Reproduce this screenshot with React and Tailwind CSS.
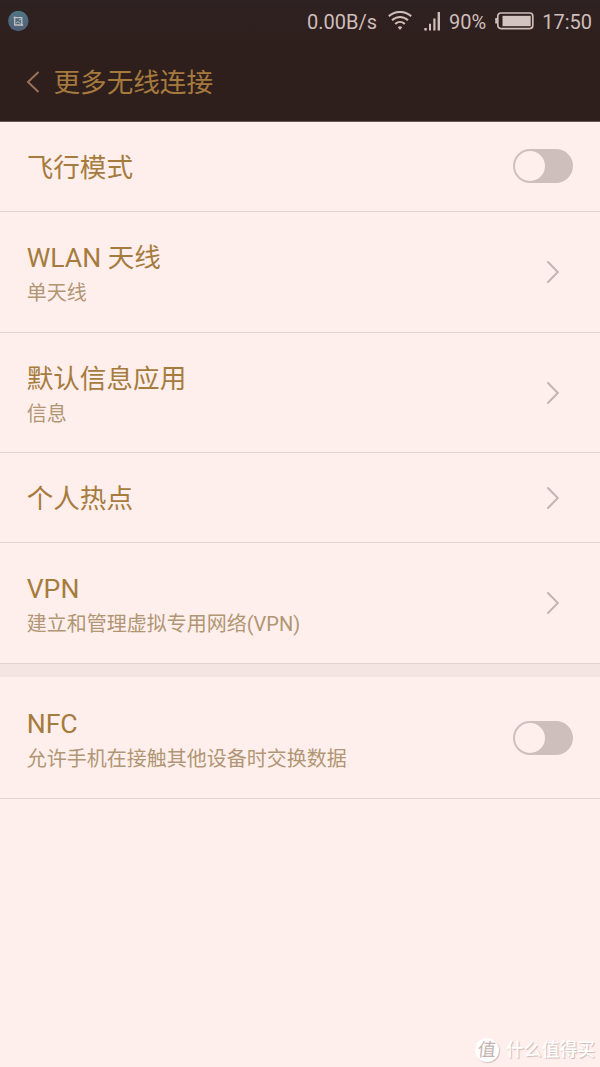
const Toggle = ({ offset }) => (
  <div className={`${offset} flex h-[34px] w-[60px] items-center rounded-full bg-[#cebfbc] pl-[1.7px]`}>
    <div className="h-[30.4px] w-[30.4px] rounded-full bg-[#ffefec]" />
  </div>
);

const Chevron = () => (
  <svg className="mr-[12.5px]" width="16" height="24" viewBox="0 0 16 24" fill="none" stroke="#c5b3b0" strokeWidth="2" strokeLinecap="round">
    <path d="M3 2L12.8 12L3 22" />
  </svg>
);

const Row = ({ title, sub, toggle, size }) => (
  <div className={`${size} flex items-center justify-between border-b border-[#e3d2cf] bg-[#ffefec] pr-[26.7px] pl-[26.7px]`}>
    <div className="pt-[2px]">
      <div className="text-[26.6px] leading-[40px] text-[#a67c3e]">{title}</div>
      {sub && <div className="text-[20px] leading-[30px] text-[#b09674]">{sub}</div>}
    </div>
    {toggle ? <Toggle offset={sub ? 'mt-px' : 'mb-px'} /> : <Chevron />}
  </div>
);

const StatusBar = () => (
  <div className="flex h-[42px] items-center pr-[8px] pl-[8px] text-[20px] leading-[24px] text-[#cebdba]">
    <svg width="21" height="21" viewBox="0 0 21 21">
      <defs>
        <linearGradient id="badge" x1="0" y1="0" x2="0" y2="1">
          <stop offset="0" stopColor="#4f7784" />
          <stop offset="1" stopColor="#4f5c76" />
        </linearGradient>
      </defs>
      <circle cx="10.3" cy="10" r="10.2" fill="url(#badge)" />
      <path d="M6.7 5.5V14H15.2M5.6 6.6H13.8V15" fill="none" stroke="#c3c0c1" strokeWidth="1.3" />
      <path d="M8 12.2L9.8 10.6L12.5 12.6M11 9.2l1.8-1" fill="none" stroke="#c3c0c1" strokeWidth="1" />
    </svg>
    <span className="mt-px ml-auto">0.00B/s</span>
    <svg className="ml-[11px]" width="24" height="20" viewBox="0 0 24 20" fill="none" stroke="#cebdba" strokeWidth="2">
      <path d="M0.8 5.3C7.3 -0.6 16.7 -0.6 23.2 5.3M4 9.3C8.7 4.9 15.3 4.9 20 9.3M7.2 13C10 10.3 14 10.3 16.8 13" />
      <path d="M9.8 16.2Q12 14.2 14.2 16.2L12 19Z" fill="#cebdba" stroke="none" />
    </svg>
    <svg className="ml-[12px]" width="17" height="20" viewBox="0 0 17 20" fill="#cebdba">
      <path d="M0.3 17h2.5v2.5h-2.5zM5 12.7h2v6.8h-2zM9.3 7.4h2.2v12.1h-2.2zM13.6 1h2.4v18.5h-2.4z" />
    </svg>
    <span className="mt-px ml-[8px]">90%</span>
    <svg className="ml-[9px]" width="39" height="18" viewBox="0 0 39 18">
      <rect x="2.8" y="1" width="35" height="15.6" rx="3" fill="none" stroke="#cebdba" strokeWidth="1.7" />
      <path d="M0.2 6h2v5.5h-2z" fill="#cebdba" />
      <path d="M7.5 3.8h28.2v10.4h-28.2z" fill="#d3c3c1" />
    </svg>
    <span className="mt-px ml-[8px]">17:50</span>
  </div>
);

export default function App() {
  return (
    <div className="flex h-[1067px] w-[600px] flex-col overflow-hidden bg-[#ffefec] font-['Roboto','Noto_Sans_CJK_SC',sans-serif]">
      <header className="h-[122px] shrink-0 border-b border-[#685957] bg-[linear-gradient(#2e2222,#2e1f1c_45px)]">
        <StatusBar />
        <div className="flex h-[79px] items-center pl-[26px]">
          <svg width="14" height="24" viewBox="0 0 14 24" fill="none" stroke="#9b7258" strokeWidth="2">
            <path d="M12.5 2L2 12L12.5 22" />
          </svg>
          <h1 className="ml-[13.5px] pt-[2px] text-[26.6px] leading-[40px] text-[#a67a3e]">更多无线连接</h1>
        </div>
      </header>
      <main>
        <Row title="飞行模式" toggle size="h-[90px]" />
        <Row title="WLAN 天线" sub="单天线" size="h-[121px]" />
        <Row title="默认信息应用" sub="信息" size="h-[120px]" />
        <Row title="个人热点" size="h-[90px]" />
        <Row title="VPN" sub="建立和管理虚拟专用网络(VPN)" size="h-[121px]" />
        <div className="h-[13px] bg-[#f4e5e2]" />
        <Row title="NFC" sub="允许手机在接触其他设备时交换数据" toggle size="h-[122px]" />
      </main>
      <footer className="mt-auto flex items-center justify-end pr-[5px] pb-[4px] text-white">
        <span className="flex h-[24px] w-[24px] items-center justify-center rounded-full bg-white text-[18px] leading-[24px] text-[#c4b3b0] shadow-[1px_1px_1px_#d3c2bf]"><span className="-skew-x-6">值</span></span>
        <span className="ml-[7px] text-[17.8px] leading-[26px] font-medium [text-shadow:1px_1px_1px_#cbb9b6]">什么值得买</span>
      </footer>
    </div>
  );
}
